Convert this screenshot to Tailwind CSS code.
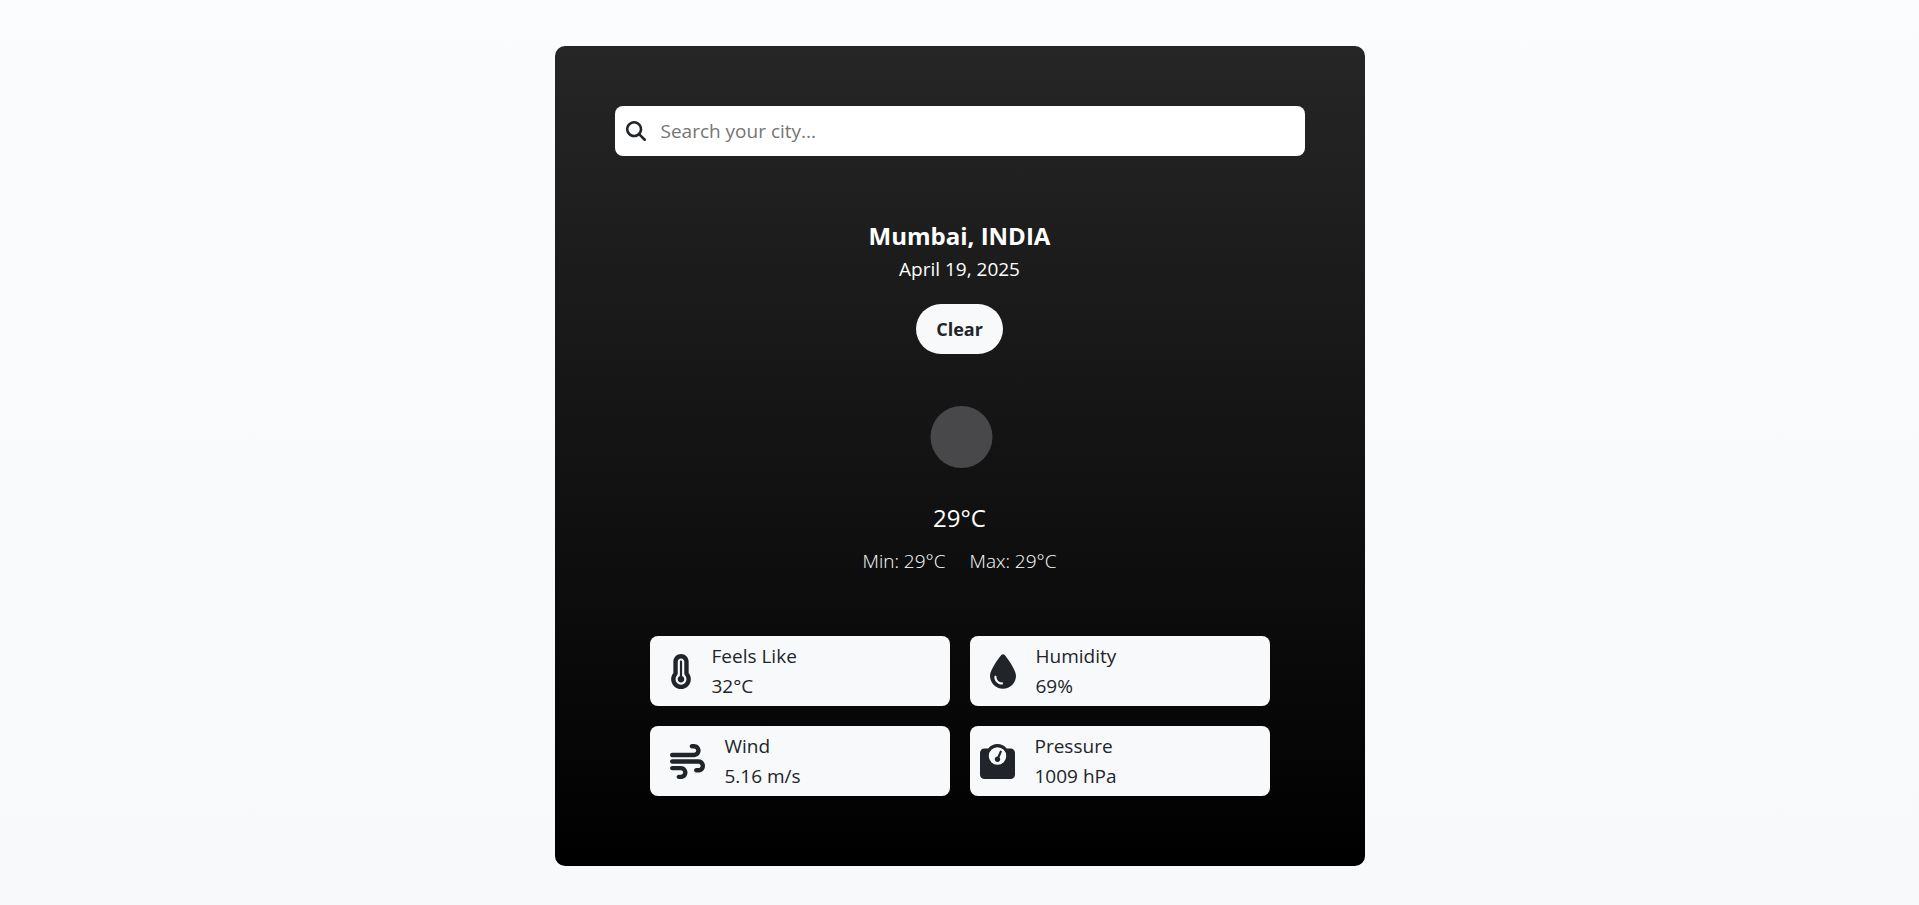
<!DOCTYPE html>
<html lang="en">
<head>
<meta charset="utf-8">
<meta name="viewport" content="width=device-width, initial-scale=1">
<title>Weather</title>
<script src="https://cdn.jsdelivr.net/npm/@tailwindcss/browser@4"></script>
</head>
<body class="min-h-screen bg-linear-to-b/srgb from-[#fafcfe] via-[#f9fafb] to-[#f8f9fb] px-4 pt-[46px] pb-[38px] font-['Segoe_UI','Open_Sans',sans-serif] text-[19px]/[30px] text-[#212529]">
<main class="mx-auto flex w-full max-w-[810px] flex-col items-center rounded-[10px] bg-linear-to-b/srgb from-[#262626] to-black px-[60px] pt-[60px] pb-[70px] text-white">
  <form class="flex h-[50px] w-full items-center gap-[15px] rounded-lg bg-white pr-[10px] pl-[11px]" role="search">
    <svg class="size-5 shrink-0 fill-[#212529]" viewBox="0 0 512 512" aria-hidden="true"><path d="M416 208c0 45.9-14.9 88.3-40 122.7L502.6 457.4c12.5 12.5 12.5 32.8 0 45.3s-32.8 12.5-45.3 0L330.7 376c-34.4 25.2-76.8 40-122.7 40C93.1 416 0 322.9 0 208S93.1 0 208 0S416 93.1 416 208zM208 352a144 144 0 1 0 0-288 144 144 0 1 0 0 288z"/></svg>
    <input class="h-full min-w-0 grow text-[#212529] outline-none placeholder:text-[#757575]" type="search" placeholder="Search your city..." aria-label="Search your city">
  </form>
  <h1 class="mt-[61px] text-2xl/[37px] font-bold">Mumbai, INDIA</h1>
  <p>April 19, 2025</p>
  <button class="mt-5 h-[50px] rounded-full bg-[#f8f9fb] px-5 text-lg font-bold text-[#212529]" type="button">Clear</button>
  <svg class="mt-[50px] size-[66px]" viewBox="0 0 66 66" role="img" aria-label="Clear sky"><circle cx="34.500" cy="33" r="31" fill="#48484a"/></svg>
  <p class="mt-[30px] text-2xl/[36px]">29°C</p>
  <div class="mt-[10px] flex gap-6 font-light"><p>Min: 29°C</p><p>Max: 29°C</p></div>
  <section class="mt-[60px] grid w-full max-w-[620px] grid-cols-1 gap-5 text-[#212529] sm:grid-cols-2">
    <article class="flex h-[70px] items-center gap-5 rounded-lg bg-[#f8f9fb] px-5">
      <svg class="h-[35px] w-[22px] shrink-0 fill-current" viewBox="0 0 320 512" aria-hidden="true"><path d="M160 64c-26.5 0-48 21.5-48 48V276.5c0 17.3-7.1 31.9-15.3 42.5C86.2 332.6 80 349.5 80 368c0 44.2 35.8 80 80 80s80-35.8 80-80c0-18.5-6.2-35.4-16.7-48.9c-8.2-10.6-15.3-25.2-15.3-42.5V112c0-26.5-21.5-48-48-48zM48 112C48 50.2 98.1 0 160 0s112 50.1 112 112V276.5c0 .1 .1 .3 .2 .6c.2 .6 .8 1.6 1.7 2.8c18.9 24.4 30.1 55 30.1 88.1c0 79.5-64.5 144-144 144S16 447.5 16 368c0-33.2 11.2-63.8 30.1-88.1c.9-1.2 1.5-2.2 1.7-2.8c.1-.3 .2-.5 .2-.6V112zM208 368c0 26.5-21.5 48-48 48s-48-21.5-48-48c0-20.9 13.4-38.7 32-45.3V112c0-8.8 7.2-16 16-16s16 7.2 16 16V322.7c18.6 6.6 32 24.4 32 45.3z"/></svg>
      <div><h2>Feels Like</h2><p>32°C</p></div>
    </article>
    <article class="flex h-[70px] items-center gap-5 rounded-lg bg-[#f8f9fb] px-5">
      <svg class="h-[35px] w-[26px] shrink-0 fill-current" viewBox="0 0 384 512" aria-hidden="true"><path d="M192 512C86 512 0 426 0 320C0 228.8 130.2 57.7 166.6 11.7C172.6 4.2 181.5 0 191.1 0h1.8c9.6 0 18.5 4.2 24.5 11.7C253.8 57.7 384 228.8 384 320c0 106-86 192-192 192zM96 336c0-8.8-7.2-16-16-16s-16 7.2-16 16c0 61.9 50.1 112 112 112c8.8 0 16-7.2 16-16s-7.2-16-16-16c-44.2 0-80-35.8-80-80z"/></svg>
      <div><h2>Humidity</h2><p>69%</p></div>
    </article>
    <article class="flex h-[70px] items-center gap-5 rounded-lg bg-[#f8f9fb] px-5">
      <svg class="size-[35px] shrink-0 fill-current" viewBox="0 0 512 512" aria-hidden="true"><path d="M288 32c0 17.7 14.3 32 32 32h32c17.7 0 32 14.3 32 32s-14.3 32-32 32H32c-17.7 0-32 14.3-32 32s14.3 32 32 32H352c53 0 96-43 96-96s-43-96-96-96H320c-17.7 0-32 14.3-32 32zm64 352c0 17.7 14.3 32 32 32h32c53 0 96-43 96-96s-43-96-96-96H32c-17.7 0-32 14.3-32 32s14.3 32 32 32H416c17.7 0 32 14.3 32 32s-14.3 32-32 32H384c-17.7 0-32 14.3-32 32zM128 512h32c53 0 96-43 96-96s-43-96-96-96H32c-17.7 0-32 14.3-32 32s14.3 32 32 32H160c17.7 0 32 14.3 32 32s-14.3 32-32 32H128c-17.7 0-32 14.3-32 32s14.3 32 32 32z"/></svg>
      <div><h2>Wind</h2><p>5.16 m/s</p></div>
    </article>
    <article class="flex h-[70px] items-center gap-5 rounded-lg bg-[#f8f9fb] px-[10px]">
      <svg class="size-[35px] shrink-0 fill-current" viewBox="0 0 512 512" aria-hidden="true"><path d="M128 176a128 128 0 1 1 256 0 128 128 0 1 1 -256 0zM391.8 64C359.5 24.9 310.7 0 256 0S152.5 24.9 120.2 64H64C28.7 64 0 92.7 0 128V448c0 35.3 28.7 64 64 64H448c35.3 0 64-28.7 64-64V128c0-35.3-28.7-64-64-64H391.8zM296 224c0-10.6-4.1-20.2-10.9-27.4l33.6-78.3c3.5-8.1-.3-17.5-8.4-21s-17.5 .3-21 8.4L255.7 184c-22 .1-39.7 18-39.7 40c0 22.1 17.9 40 40 40s40-17.9 40-40z"/></svg>
      <div><h2>Pressure</h2><p>1009 hPa</p></div>
    </article>
  </section>
</main>
</body>
</html>
